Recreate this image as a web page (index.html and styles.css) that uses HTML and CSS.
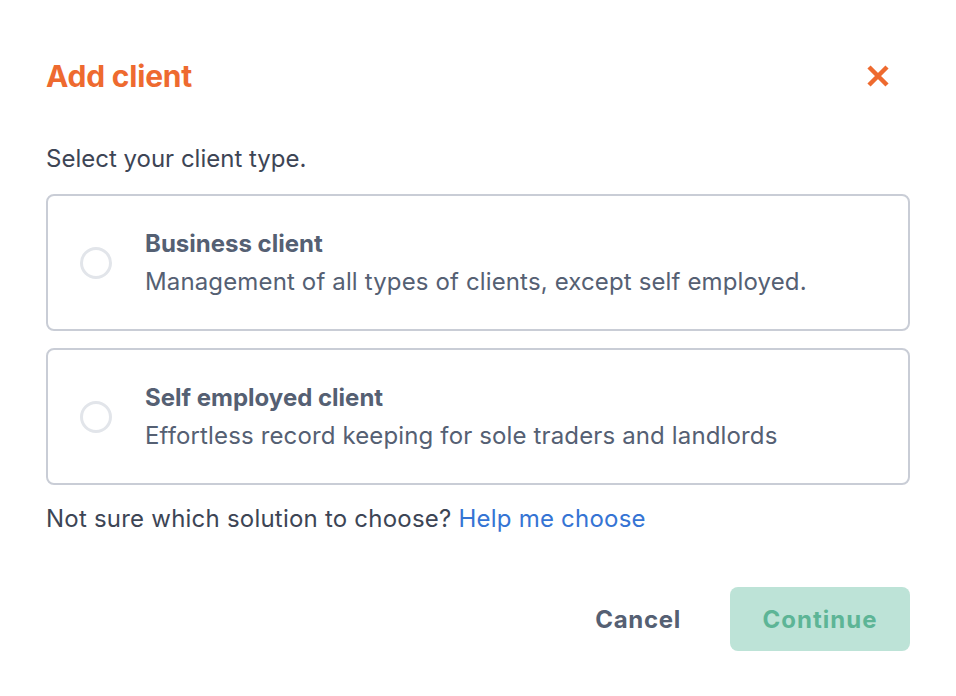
FILE: index.html
```html
<!DOCTYPE html>
<html lang="en">
<head>
<meta charset="utf-8">
<title>Add client</title>
<link rel="stylesheet" href="styles.css">
</head>
<body>
<div class="dialog">
  <div class="header">
    <h1 class="title">Add client</h1>
    <button class="close" aria-label="Close">
      <svg width="24" height="24" viewBox="0 0 24 24"><path d="M3 3L21 21M21 3L3 21" stroke="#ee6a2f" stroke-width="4.5" fill="none"/></svg>
    </button>
  </div>
  <p class="intro">Select your client type.</p>
  <div class="options">
    <label class="option">
      <span class="radio"></span>
      <span class="option-text">
        <span class="option-title">Business client</span>
        <span class="option-desc">Management of all types of clients, except self employed.</span>
      </span>
    </label>
    <label class="option">
      <span class="radio"></span>
      <span class="option-text">
        <span class="option-title">Self employed client</span>
        <span class="option-desc">Effortless record keeping for sole traders and landlords</span>
      </span>
    </label>
  </div>
  <p class="help">Not sure which solution to choose? <a href="#" class="help-link">Help me choose</a></p>
  <div class="actions">
    <button class="btn-cancel">Cancel</button>
    <button class="btn-continue">Continue</button>
  </div>
</div>
</body>
</html>
```

FILE: styles.css
```css
* { box-sizing: border-box; }
html, body { margin: 0; padding: 0; background: #fff; }
body {
  font-family: Inter, "Liberation Sans", sans-serif;
  color: #3d4555;
}
.dialog {
  padding: 56px 46px 0 46px;
}
.header {
  display: flex;
  justify-content: space-between;
  align-items: center;
  height: 40px;
}
.title {
  margin: 0;
  font-size: 30px;
  font-weight: 700;
  letter-spacing: -0.2px;
  color: #ee6a2f;
  line-height: 40px;
}
.close {
  border: 0;
  background: none;
  padding: 0;
  margin-right: 20px;
  width: 24px;
  height: 24px;
  display: flex;
}
.intro {
  margin: 47px 0 0 0;
  font-size: 24px;
  line-height: 32px;
}
.options {
  margin-top: 19px;
  display: flex;
  flex-direction: column;
  gap: 17px;
}
.option {
  display: flex;
  align-items: center;
  height: 137px;
  border: 2px solid #c9cdd6;
  border-radius: 8px;
  padding-left: 32px;
}
.radio {
  width: 32px;
  height: 32px;
  border-radius: 50%;
  border: 3px solid #e2e5ea;
  flex: none;
}
.option-text {
  display: flex;
  flex-direction: column;
  margin-left: 33px;
  color: #556073;
}
.option-title {
  font-size: 24px;
  font-weight: 700;
  line-height: 38px;
}
.option-desc {
  font-size: 24px;
  line-height: 38px;
  letter-spacing: 0.14px;
}
.help {
  margin: 18px 0 0 0;
  font-size: 24px;
  line-height: 32px;
  letter-spacing: 0.22px;
}
.help-link {
  color: #3574d4;
  text-decoration: none;
}
.actions {
  margin-top: 52px;
  display: flex;
  justify-content: flex-end;
  align-items: center;
  gap: 49px;
}
.btn-cancel {
  border: 0;
  background: none;
  font-family: inherit;
  font-size: 24px;
  font-weight: 700;
  letter-spacing: 0.7px;
  color: #556073;
  padding: 0;
}
.btn-continue {
  border: 0;
  width: 180px;
  height: 64px;
  border-radius: 8px;
  background: #bde3d7;
  color: #5db596;
  font-family: inherit;
  font-size: 24px;
  font-weight: 700;
  letter-spacing: 1px;
}
```
